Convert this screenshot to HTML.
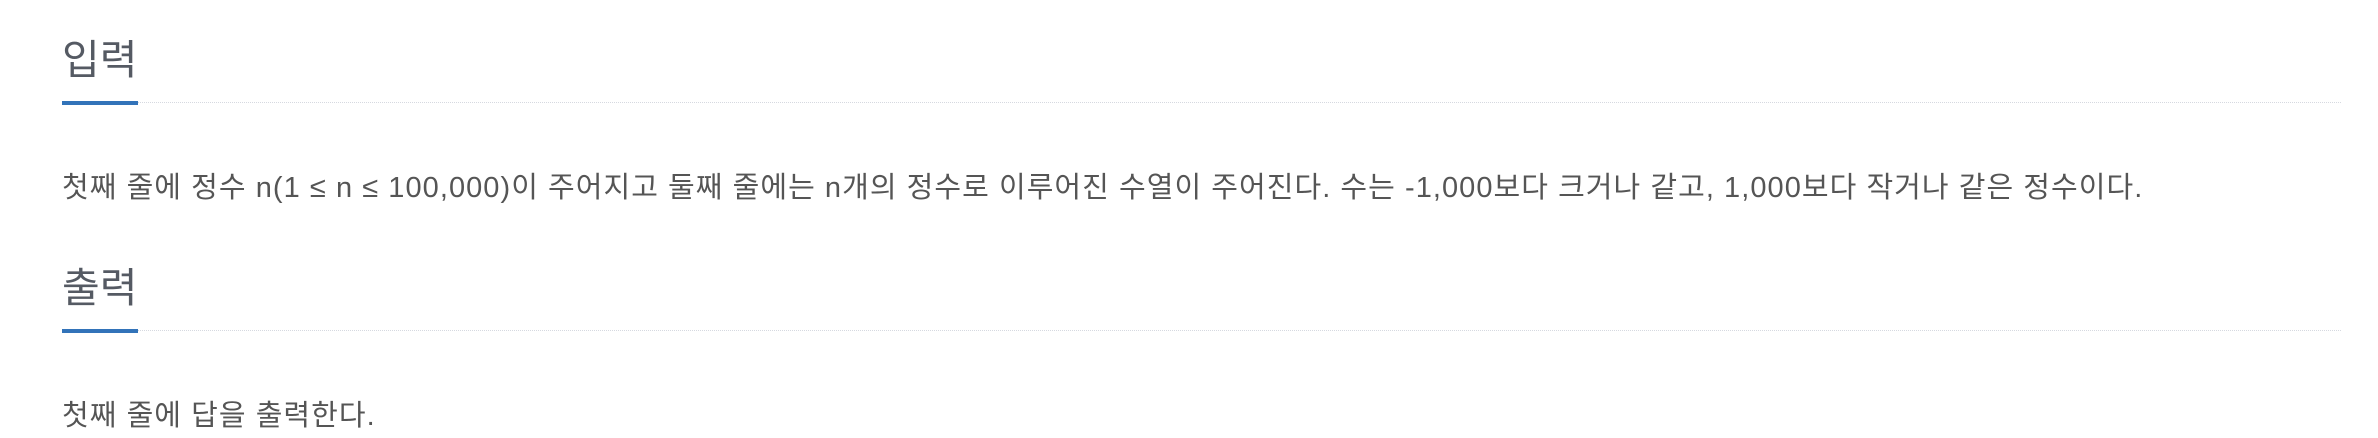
<!DOCTYPE html>
<html><head><meta charset="utf-8"><style>
html,body{margin:0;padding:0;background:#fff;width:2378px;height:438px;overflow:hidden}
.h{position:absolute;left:62px;font-family:"Liberation Sans","Noto Sans CJK KR",sans-serif;font-size:41px;line-height:41px;color:#555a63;white-space:nowrap}
.p{position:absolute;left:62px;font-family:"Liberation Sans","Noto Sans CJK KR",sans-serif;font-size:29px;line-height:29px;color:#555;white-space:nowrap;letter-spacing:1.05px}
.dl{position:absolute;left:138px;width:2204px;height:1px;background-image:linear-gradient(to right,#d6d9e0 50%,transparent 50%);background-size:2px 1px}
.bl{position:absolute;left:62px;width:76px;height:4px;background:#3273b9}
</style></head><body>
<div class="h" style="top:40px">입력</div>
<div class="bl" style="top:101px"></div>
<div class="dl" style="top:102px"></div>
<div class="p" style="top:174px">첫째 줄에 정수 n(1 ≤ n ≤ 100,000)이 주어지고 둘째 줄에는 n개의 정수로 이루어진 수열이 주어진다. 수는 -1,000보다 크거나 같고, 1,000보다 작거나 같은 정수이다.</div>
<div class="h" style="top:268px">출력</div>
<div class="bl" style="top:329px"></div>
<div class="dl" style="top:330px"></div>
<div class="p" style="top:402px">첫째 줄에 답을 출력한다.</div>
</body></html>
